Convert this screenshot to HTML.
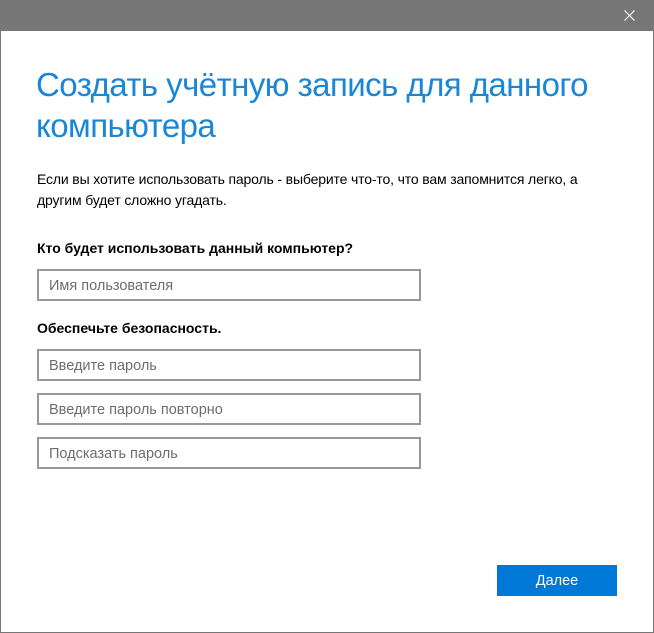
<!DOCTYPE html>
<html><head><meta charset="utf-8"><style>
body{margin:0;width:654px;height:633px;overflow:hidden;background:#fff;font-family:"Liberation Sans","Noto Sans CJK SC",sans-serif;position:relative}
.win{position:absolute;left:0;top:0;width:652px;height:631px;border:1px solid #777;}
.tb{position:absolute;left:0;top:0;width:654px;height:31px;background:#777}
.x{position:absolute;left:624px;top:10px}
.t{position:absolute;left:36px;color:#1a86d6;font-size:33px;font-weight:300;white-space:nowrap;letter-spacing:-0.55px}
.p{position:absolute;left:37px;font-size:14px;color:#000;white-space:nowrap;letter-spacing:-0.15px}
.b{font-weight:bold;font-size:14px;letter-spacing:0}
.in{position:absolute;left:37px;height:28px;border:2px solid #999;font-size:14.5px;color:#6d6d6d;line-height:30px;padding-left:10px;box-sizing:content-box;width:370px}
.btn{position:absolute;left:497px;top:565px;width:120px;height:31px;background:#0078d7;color:#fff;font-size:14.5px;text-align:center;line-height:32px}
</style></head><body>
<div class="win"></div>
<div class="tb"></div>
<svg class="x" width="11" height="11"><path d="M0.5 0.5L10.5 10.5M10.5 0.5L0.5 10.5" stroke="#fff" stroke-width="1.2"/></svg>
<div class="t" style="top:66px">Создать учётную запись для данного</div>
<div class="t" style="top:107px">компьютера</div>
<div class="p" style="top:171px">Если вы хотите использовать пароль - выберите что-то, что вам запомнится легко, а</div>
<div class="p" style="top:192px">другим будет сложно угадать.</div>
<div class="p b" style="top:240px">Кто будет использовать данный компьютер?</div>
<div class="in" style="top:269px">Имя пользователя</div>
<div class="p b" style="top:320px">Обеспечьте безопасность.</div>
<div class="in" style="top:349px">Введите пароль</div>
<div class="in" style="top:393px">Введите пароль повторно</div>
<div class="in" style="top:437px">Подсказать пароль</div>
<div class="btn">Далее</div>
</body></html>
